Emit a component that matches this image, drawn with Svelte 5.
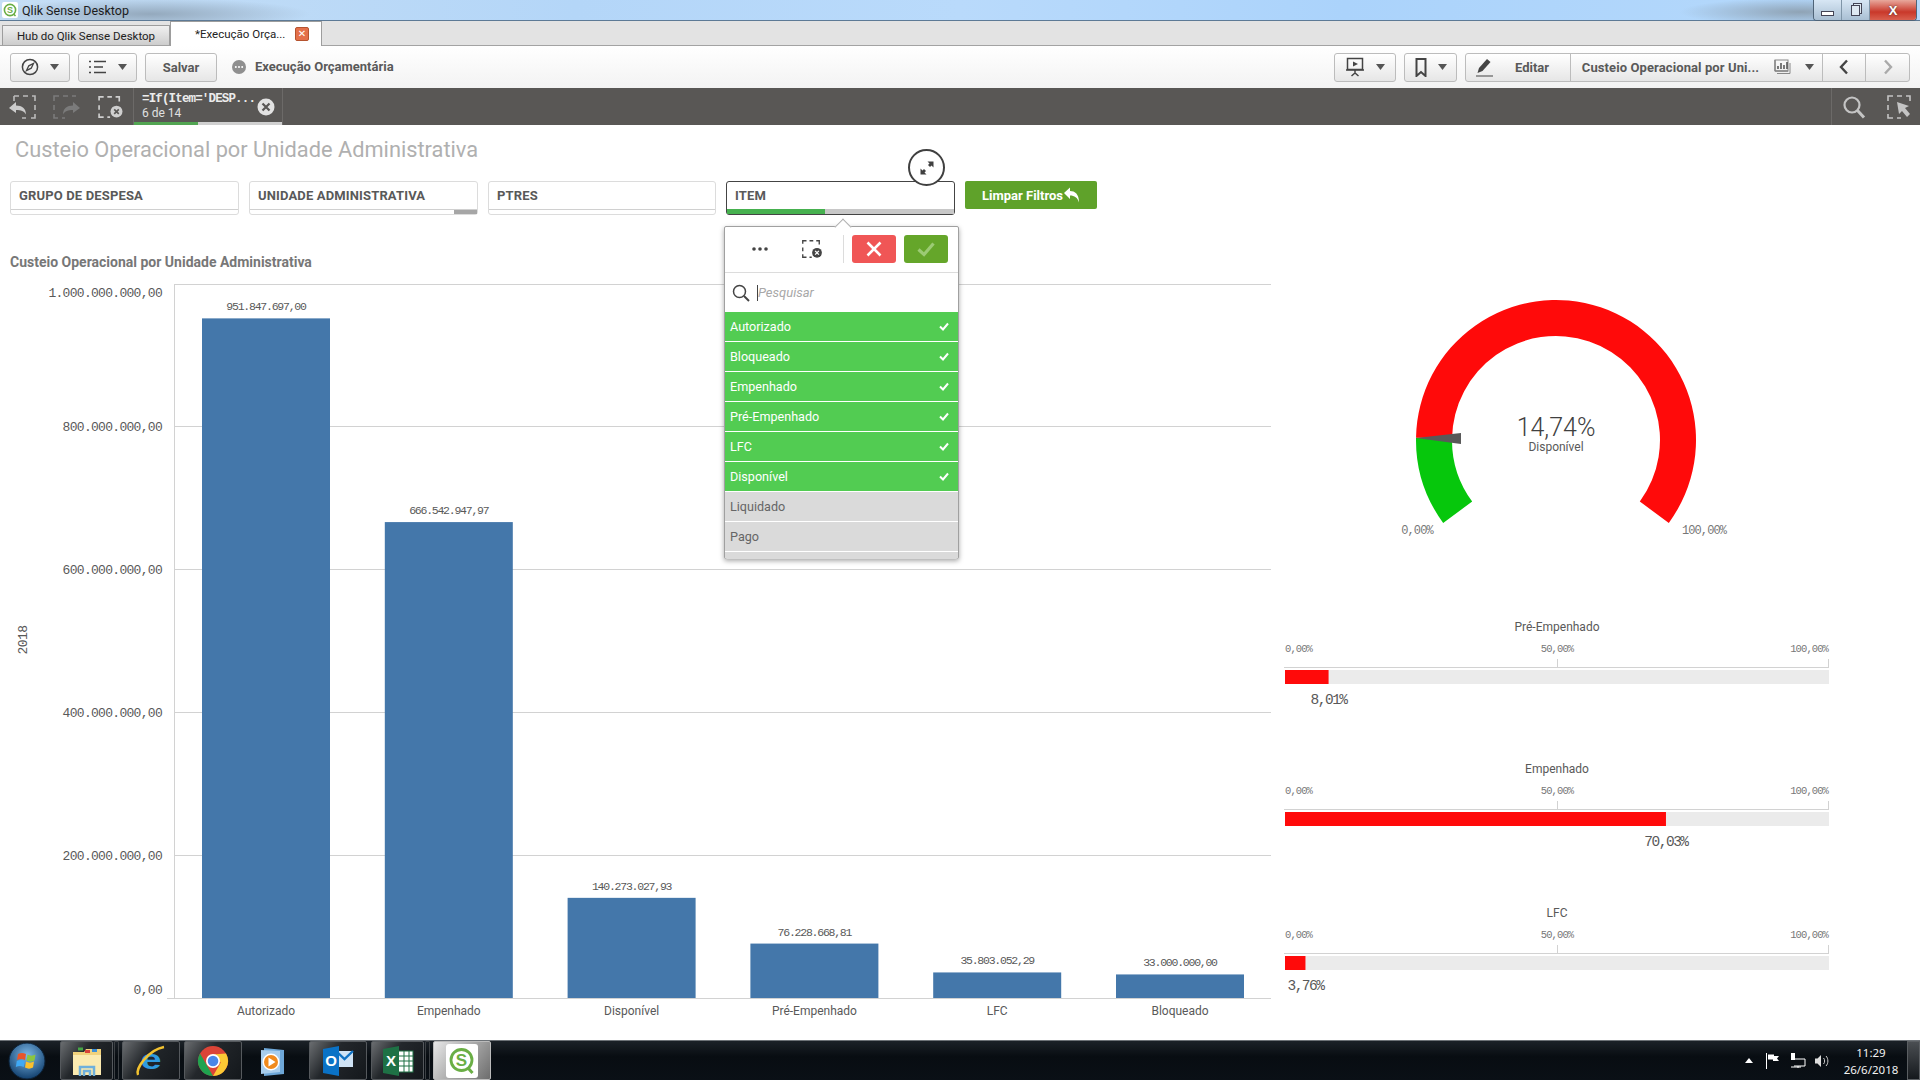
<script lang="ts">
  type Bar = { name: string; value: number; label: string };
  const bars: Bar[] = [
    { name: 'Autorizado', value: 951847697, label: '951.847.697,00' },
    { name: 'Empenhado', value: 666542947.97, label: '666.542.947,97' },
    { name: 'Disponível', value: 140273027.93, label: '140.273.027,93' },
    { name: 'Pré-Empenhado', value: 76228668.81, label: '76.228.668,81' },
    { name: 'LFC', value: 35803052.29, label: '35.803.052,29' },
    { name: 'Bloqueado', value: 33000000, label: '33.000.000,00' },
  ];
  const ticks = [
    { y: 284, ly: 293, label: '1.000.000.000,00' },
    { y: 426, ly: 427, label: '800.000.000,00' },
    { y: 569, ly: 570, label: '600.000.000,00' },
    { y: 712, ly: 713, label: '400.000.000,00' },
    { y: 855, ly: 856, label: '200.000.000,00' },
    { y: 998, ly: 990, label: '0,00' },
  ];
  const barTop = (v: number) => 998 - (v / 1e9) * 714;
  const barX = (i: number) => 202 + i * 182.8;

  const filters = ['GRUPO DE DESPESA', 'UNIDADE ADMINISTRATIVA', 'PTRES'];
  const selected = ['Autorizado', 'Bloqueado', 'Empenhado', 'Pré-Empenhado', 'LFC', 'Disponível'];
  const optional = ['Liquidado', 'Pago', ''];

  const bullets = [
    { title: 'Pré-Empenhado', pct: 8.01, text: '8,01%' },
    { title: 'Empenhado', pct: 70.03, text: '70,03%' },
    { title: 'LFC', pct: 3.76, text: '3,76%' },
  ];

  // gauge geometry, in page coordinates
  const cx = 1556, cy = 440, ro = 140, ri = 104, sweep = 126.3;
  function pt(r: number, deg: number) {
    const a = (deg * Math.PI) / 180;
    return `${(cx + r * Math.sin(a)).toFixed(2)} ${(cy - r * Math.cos(a)).toFixed(2)}`;
  }
  function arc(from: number, to: number) {
    const large = to - from > 180 ? 1 : 0;
    return `M${pt(ro, from)} A${ro} ${ro} 0 ${large} 1 ${pt(ro, to)} L${pt(ri, to)} A${ri} ${ri} 0 ${large} 0 ${pt(ri, from)} Z`;
  }
  const split = -sweep + 2 * sweep * 0.1474;
</script>

{#snippet caret()}
  <svg class="caret" width="9" height="6" viewBox="0 0 9 6"><path d="M0 0h9L4.5 6z" fill="#555" /></svg>
{/snippet}

{#snippet clearSel(c: string, x: string, w: number, h: number)}
  <svg width={w} height={h} viewBox="0 0 28 24">
    <path d="M1 5V1h5M10 1h5M19 1h0M1 10v5M1 19v4h5M10 23h3M19 1h4v5" fill="none" stroke={c} stroke-width="1.8" />
    <circle cx="20" cy="17" r="6.5" fill={c} />
    <path d="M17.5 14.5l5 5m0-5l-5 5" stroke={x} stroke-width="1.8" />
  </svg>
{/snippet}

<div class="page">
  <header class="titlebar">
    <svg width="16" height="16" viewBox="0 0 16 16" class="app-ico">
      <rect width="16" height="16" rx="2" fill="#fff" />
      <circle cx="8" cy="8" r="5.6" fill="none" stroke="#6aae45" stroke-width="1.6" />
      <path d="M11.5 12l2 2" stroke="#6aae45" stroke-width="1.6" />
      <text x="8" y="11" text-anchor="middle" class="ico-s small">S</text>
    </svg>
    <span class="wintitle">Qlik Sense Desktop</span>
    <div class="wincontrols">
      <span class="wc"><i class="min"></i></span>
      <span class="wc"><i class="max"></i></span>
      <span class="wc close">X</span>
    </div>
  </header>

  <nav class="tabs">
    <div class="tab">Hub do Qlik Sense Desktop</div>
    <div class="tab active">
      <span class="tabname">*Execução Orça...</span>
      <span class="tabx">✕</span>
    </div>
  </nav>

  <div class="toolbar">
    <button class="btn w60">
      <svg width="18" height="18" viewBox="0 0 18 18"><circle cx="9" cy="9" r="7.6" fill="none" stroke="#444" stroke-width="1.5" /><path d="M12.5 5.5L10.2 10.2 5.5 12.5 7.8 7.8z" fill="none" stroke="#444" stroke-width="1.3" /></svg>
      {@render caret()}
    </button>
    <button class="btn w59">
      <svg width="18" height="14" viewBox="0 0 18 14"><path d="M0 1.5h2M0 7h2M0 12.5h2M5 1.5h12M5 7h9M5 12.5h12" stroke="#444" stroke-width="1.7" /></svg>
      {@render caret()}
    </button>
    <button class="btn save">Salvar</button>
    <svg class="dotcirc" width="14" height="14" viewBox="0 0 14 14"><circle cx="7" cy="7" r="7" fill="#8f8f8f" /><circle cx="3.8" cy="7" r="1" fill="#fff" /><circle cx="7" cy="7" r="1" fill="#fff" /><circle cx="10.2" cy="7" r="1" fill="#fff" /></svg>
    <span class="appname">Execução Orçamentária</span>
    <div class="spacer"></div>
    <button class="btn w62">
      <svg width="20" height="20" viewBox="0 0 20 20"><rect x="2.5" y="1.5" width="15" height="11" fill="none" stroke="#444" stroke-width="1.5" /><path d="M8 4.5l5 2.5-5 2.5z" fill="#444" /><path d="M1 13h18M10 13v3M6.5 19l3.5-3 3.5 3" fill="none" stroke="#444" stroke-width="1.5" /></svg>
      {@render caret()}
    </button>
    <button class="btn w53">
      <svg width="12" height="19" viewBox="0 0 12 19"><path d="M1.5 1h9v17l-4.500-4-4.500 4z" fill="none" stroke="#444" stroke-width="2" /></svg>
      {@render caret()}
    </button>
    <div class="btngroup">
      <button class="seg edit">
        <svg width="18" height="20" viewBox="0 0 18 20"><path d="M1.500 16l1.500-5 8-9 3.500 3-8 9z" fill="#444" /><path d="M0 19h17" stroke="#444" stroke-width="1.2" /></svg>
        <span>Editar</span>
      </button>
      <button class="seg sheet">
        <span class="sheetname">Custeio Operacional por Uni...</span>
        <svg width="18" height="16" viewBox="0 0 18 16"><path d="M1 1v11h13" fill="none" stroke="#555" /><rect x="1" y="1" width="13" height="11" fill="none" stroke="#888" /><path d="M4 10V7M7 10V4M10 10V6M13 10V3" stroke="#444" stroke-width="1.4" /><path d="M3 14.500h13V4" fill="none" stroke="#888" /></svg>
        {@render caret()}
      </button>
      <button class="seg nav" aria-label="anterior">
        <svg width="10" height="16" viewBox="0 0 10 16"><path d="M8 1.500L2 8l6 6.500" fill="none" stroke="#444" stroke-width="2.400" /></svg>
      </button>
      <button class="seg nav" aria-label="próxima">
        <svg width="10" height="16" viewBox="0 0 10 16"><path d="M2 1.500L8 8l-6 6.500" fill="none" stroke="#aaa" stroke-width="2.400" /></svg>
      </button>
    </div>
  </div>

  <div class="selbar">
    <div class="selicons">
      <svg width="28" height="24" viewBox="0 0 28 24">
        <path d="M6 1h5M15 1h5M24 1h3v5M27 10v5M27 19v4h-4M18 23h-4M6 6V1" fill="none" stroke="#bbb" stroke-width="1.600" />
        <path d="M1 13l7-6v3.500c6 0 10 3 10 9-2-3.500-5-4.500-10-4.500V18z" fill="#ccc" />
      </svg>
      <svg width="28" height="24" viewBox="0 0 28 24">
        <path d="M1 6V1h5M10 1h5M19 1h4M1 10v5M1 19v4h4M9 23h3" fill="none" stroke="#7b7b7b" stroke-width="1.600" />
        <path d="M27 13l-7-6v3.500c-6 0-10 3-10 9 2-3.500 5-4.500 10-4.500V18z" fill="#7b7b7b" />
      </svg>
      {@render clearSel('#cfcfcf', '#595755', 26, 22)}
    </div>
    <div class="seltab">
      <div class="seltext">
        <strong>=If(Item='DESP...</strong>
        <span>6 de 14</span>
      </div>
      <svg width="18" height="18" viewBox="0 0 18 18"><circle cx="9" cy="9" r="8.500" fill="#e2e2e2" /><path d="M5.500 5.500l7 7m0-7l-7 7" stroke="#595755" stroke-width="2.200" /></svg>
      <div class="selprogress"><i></i></div>
    </div>
    <div class="spacer"></div>
    <div class="seltools">
      <svg width="24" height="24" viewBox="0 0 24 24"><circle cx="10" cy="10" r="7.500" fill="none" stroke="#c4c4c4" stroke-width="2.200" /><path d="M15.500 15.500L22 22.500" stroke="#c4c4c4" stroke-width="3" /></svg>
      <svg width="24" height="24" viewBox="0 0 24 24">
        <path d="M1 6V1h5M10 1h5M19 1h4v5M1 10v5M1 19v4h5M10 23h4" fill="none" stroke="#c4c4c4" stroke-width="1.600" />
        <path d="M10 7l12 4-4 2 5 6-3 3-5-6-3 3z" fill="#c4c4c4" />
      </svg>
    </div>
  </div>

  <main class="content">
    <h1 class="sheettitle">Custeio Operacional por Unidade Administrativa</h1>

    <div class="filters">
      {#each filters as f, i}
        <div class="filter">
          <span class="flabel">{f}</span>
          <div class="fbar">{#if i === 1}<i class="fgrey"></i>{/if}</div>
        </div>
      {/each}
      <div class="filter open">
        <span class="flabel">ITEM</span>
        <div class="fbar"><i class="fgreen"></i></div>
        <div class="expand">
          <svg width="18" height="18" viewBox="0 0 18 18"><path d="M15.500 2.500v6l-2-2-1.500 1.500-2-2 1.500-1.500-2-2zM2.500 15.500v-6l2 2 1.500-1.500 2 2-1.500 1.500 2 2z" fill="#404040" /></svg>
        </div>
        <div class="popover">
          <i class="arrow"></i>
          <div class="poptools">
            <svg class="dots" width="16" height="4" viewBox="0 0 16 4"><circle cx="2" cy="2" r="1.800" fill="#444" /><circle cx="8" cy="2" r="1.800" fill="#444" /><circle cx="14" cy="2" r="1.800" fill="#444" /></svg>
            {@render clearSel('#444', '#fff', 21, 18)}
            <i class="vsep"></i>
            <span class="act red">
              <svg width="18" height="18" viewBox="0 0 18 18"><path d="M2.500 2.500l13 13m0-13l-13 13" stroke="#fff" stroke-width="2.600" /></svg>
            </span>
            <span class="act green">
              <svg width="20" height="18" viewBox="0 0 20 18"><path d="M2.500 9.500l5.500 5 9.500-11" fill="none" stroke="#9ccb74" stroke-width="3.200" /></svg>
            </span>
          </div>
          <div class="popsearch">
            <svg width="18" height="18" viewBox="0 0 18 18"><circle cx="7.500" cy="7.500" r="6" fill="none" stroke="#444" stroke-width="1.500" /><path d="M12 12l5 5" stroke="#444" stroke-width="2" /></svg>
            <i class="cursor"></i>
            <span class="ph">Pesquisar</span>
          </div>
          {#each selected as s}
            <div class="row sel">
              <span>{s}</span>
              <svg width="10" height="9" viewBox="0 0 10 9"><path d="M1 4.500l3 3 5-6" fill="none" stroke="#fff" stroke-width="2" /></svg>
            </div>
          {/each}
          {#each optional as o}
            <div class="row alt"><span>{o}</span></div>
          {/each}
        </div>
      </div>
      <button class="clearbtn">
        Limpar Filtros
        <svg width="16" height="16" viewBox="0 0 16 16"><path d="M0 6l6-5.500V4c5 0 9 3 9 11.500C13.500 10.500 10.500 8.500 6 8.500V12z" fill="#fff" /></svg>
      </button>
    </div>

    <h2 class="charttitle">Custeio Operacional por Unidade Administrativa</h2>

    <div class="charts">
      <svg class="barchart" width="1280" height="766" viewBox="0 274 1280 766">
        <text class="ax2018" transform="translate(27 640) rotate(-90)" text-anchor="middle">2018</text>
        {#each ticks as t, i}
          <line x1={i === 5 ? 167 : 174} x2="1271" y1={t.y + 0.5} y2={t.y + 0.5} class="grid" />
          <text x="162" y={t.ly + 4} text-anchor="end" class="ytick">{t.label}</text>
        {/each}
        <line x1="174.500" x2="174.500" y1="284" y2="998" class="grid" />
        {#each bars as b, i}
          <rect x={barX(i)} y={barTop(b.value)} width="128" height={998 - barTop(b.value)} class="bar" />
          <text x={barX(i) + 64} y={barTop(b.value) - 8} text-anchor="middle" class="vlabel">{b.label}</text>
          <text x={barX(i) + 64} y="1015" text-anchor="middle" class="xlabel">{b.name}</text>
        {/each}
      </svg>

      <aside class="kpis">
        <svg width="640" height="286" viewBox="1280 274 640 286">
          <path d={arc(-sweep, split)} fill="#06c70c" />
          <path d={arc(split, sweep)} fill="#ff0a0a" />
          <path d="M1416 438l45-5v11z" fill="#595959" />
          <text x={cx} y="436" text-anchor="middle" class="gval">14,74%</text>
          <text x={cx} y="451" text-anchor="middle" class="glabel">Disponível</text>
          <text x="1417" y="534" text-anchor="middle" class="gend">0,00%</text>
          <text x="1704" y="534" text-anchor="middle" class="gend">100,00%</text>
        </svg>

        {#each bullets as b}
          <svg class="bullet" width="640" height="100" viewBox="0 0 640 100">
            <text x="277" y="14" text-anchor="middle" class="btitle">{b.title}</text>
            <text x="5" y="35" class="bscale">0,00%</text>
            <text x="277" y="35" text-anchor="middle" class="bscale">50,00%</text>
            <text x="548" y="35" text-anchor="end" class="bscale">100,00%</text>
            <path d="M4 50.500H549M277.500 42v8M548.500 42v8" class="grid" fill="none" />
            <rect x="5" y="53" width="544" height="14" fill="#ebebeb" />
            <rect x="5" y="53" width={(544 * b.pct) / 100} height="14" fill="#ff0a0a" />
            <text x={5 + (544 * b.pct) / 100} y="87" text-anchor="middle" class="bval">{b.text}</text>
          </svg>
        {/each}
      </aside>
    </div>
  </main>

  <footer class="taskbar">
    <div class="orb">
      <svg width="38" height="38" viewBox="0 0 38 38">
        <defs>
          <radialGradient id="orbg" cx="50%" cy="35%" r="65%"><stop offset="0" stop-color="#7db9e8" /><stop offset="1" stop-color="#12406e" /></radialGradient>
        </defs>
        <circle cx="19" cy="19" r="18" fill="url(#orbg)" stroke="#0c2238" />
        <path d="M10 12c3-1.500 5-1.500 8 0l-1 6c-3-1.500-5-1.500-8 0z" fill="#e8552a" />
        <path d="M19.500 12.500c3 1.500 5 1.500 8 0l-1 6c-3 1.500-5 1.500-8 0z" fill="#8cc63f" />
        <path d="M8.800 19c3-1.500 5-1.500 8 0l-1 6c-3-1.500-5-1.500-8 0z" fill="#3fa9f5" />
        <path d="M18 19.500c3 1.500 5 1.500 8 0l-1 6c-3 1.500-5 1.500-8 0z" fill="#fbc02d" />
      </svg>
    </div>
    <div class="tb w53">
      <svg width="34" height="34" viewBox="0 0 34 34">
        <path d="M3 8h11l2-3h15v24H3z" fill="#f1d27c" />
        <rect x="3" y="11" width="28" height="20" fill="#fbeab0" />
        <rect x="8" y="3.500" width="5" height="3" fill="#46a546" /><rect x="15" y="6" width="5" height="3" fill="#d8433a" /><rect x="22" y="5" width="5" height="3" fill="#3c8fd8" />
        <path d="M10 32V23h14v9M14 32v-5h6v5" fill="none" stroke="#6fb0dc" stroke-width="2.500" />
      </svg>
    </div>
    <i class="tbsep"></i>
    <div class="tb w58 first">
      <svg width="34" height="34" viewBox="0 0 34 34">
        <text transform="translate(17 25) scale(1.35 1)" text-anchor="middle" class="ie">e</text>
        <path d="M4 31C1 25 14 6 30 3" fill="none" stroke="#f2c230" stroke-width="2.400" />
      </svg>
    </div>
    <div class="tb w58">
      <svg width="32" height="32" viewBox="0 0 32 32">
        <circle cx="16" cy="16" r="15" fill="#db4437" />
        <path d="M16 31A15 15 0 0 1 3 8.500l7.800 13.500z" fill="#1fa34f" />
        <path d="M29 8.500A15 15 0 0 1 16 31l7.800-13.500L16 9.500z" fill="#fcc934" />
        <circle cx="16" cy="16" r="7" fill="#fff" /><circle cx="16" cy="16" r="5.300" fill="#4a86e8" />
      </svg>
    </div>
    <div class="tb plain">
      <svg width="26" height="30" viewBox="0 0 26 30">
        <path d="M4 2l20 2v24L4 30z" fill="#6ea7d8" /><path d="M1 4l19 1v21L1 28z" fill="#a8cdec" />
        <circle cx="11" cy="16" r="8.500" fill="#fff" /><circle cx="11" cy="16" r="7" fill="#f08a1d" /><path d="M8.500 11.500l7 4.500-7 4.500z" fill="#fff" />
      </svg>
    </div>
    <div class="tb w58">
      <svg width="32" height="32" viewBox="0 0 32 32">
        <path d="M14 6h17v16H14z" fill="#cfe3f5" /><path d="M14 6l8.500 8L31 6" fill="none" stroke="#1072c4" stroke-width="2.400" />
        <path d="M1 4l16-3v30L1 28z" fill="#0a72c6" /><text x="9" y="21" text-anchor="middle" class="ol">O</text>
      </svg>
    </div>
    <div class="tb w53 xl">
      <svg width="32" height="32" viewBox="0 0 32 32">
        <rect x="15" y="6" width="16" height="21" fill="#fff" stroke="#1e7145" />
        <path d="M15 11h16M15 16h16M15 21h16M22 6v21M27 6v21" stroke="#1e7145" />
        <path d="M1 4l16-3v30L1 28z" fill="#1e7145" /><text x="9" y="21" text-anchor="middle" class="ol">X</text>
      </svg>
    </div>
    <i class="tbsep"></i>
    <div class="tb w58 active">
      <svg width="32" height="34" viewBox="0 0 32 34">
        <rect width="32" height="34" rx="3" fill="#fff" />
        <circle cx="15.500" cy="16" r="10.500" fill="none" stroke="#6aae45" stroke-width="2.800" />
        <path d="M22 24l4.500 5" stroke="#6aae45" stroke-width="3" />
        <text x="15.500" y="21.500" text-anchor="middle" class="ico-s">S</text>
      </svg>
    </div>
    <div class="spacer"></div>
    <div class="tray">
      <svg class="traytri" width="8" height="5" viewBox="0 0 8 5"><path d="M0 5l4-5 4 5z" fill="#fff" /></svg>
      <svg width="16" height="16" viewBox="0 0 16 16"><path d="M1.500 0v16" stroke="#fff" /><path d="M3 1.500h6v1.500h5l-2 2.500 2 2.500H8V6.500H3z" fill="#fff" /></svg>
      <svg width="16" height="16" viewBox="0 0 16 16"><path d="M4 6H15V13H4M1 14H11M8 13v2" fill="none" stroke="#fff" /><rect x="1" y="0" width="4" height="7" fill="#fff" /></svg>
      <svg width="15" height="14" viewBox="0 0 15 14"><path d="M0 4.500h2.500L6 1v12L2.500 9.500H0z" fill="#ddd" /><path d="M8.500 4c1.500 1.500 1.500 4.500 0 6M11 2c2.500 2.500 2.500 7.500 0 10" fill="none" stroke="#ccc" /></svg>
    </div>
    <div class="clock"><span>11:29</span><span>26/6/2018</span></div>
    <i class="showdesk"></i>
  </footer>
</div>

<style>
  :global(body) {
    margin: 0;
    overflow: hidden;
    background: #fff;
  }
  i {
    display: block;
  }
  .page {
    width: 1920px;
    height: 1080px;
    display: flex;
    flex-direction: column;
    overflow: hidden;
    font-family: Roboto, sans-serif;
    color: #595959;
  }
  .spacer {
    flex: 1;
  }

  .titlebar {
    height: 21px;
    flex: none;
    box-sizing: border-box;
    display: flex;
    align-items: center;
    border-bottom: 1px solid #5d7a96;
    background:
      radial-gradient(ellipse 160px 16px at 150px 14px, #94a9bd, transparent),
      radial-gradient(ellipse 120px 14px at 1800px 12px, #8fa3b5, transparent),
      linear-gradient(90deg, #c5def5 0, #b4d6f8 30%, #b9dafb 50%, #abd3fb 70%, #b6d9fb 100%);
  }
  .app-ico {
    margin: 0 4px 0 2px;
  }
  .wintitle {
    font: 12.5px Roboto, sans-serif;
    color: #1c1c1c;
  }
  .wincontrols {
    margin-left: auto;
    margin-right: 3px;
    display: flex;
    height: 20px;
    align-self: flex-start;
    border: 1px solid #4f6478;
    border-top: 0;
    border-radius: 0 0 4px 4px;
    overflow: hidden;
  }
  .wc {
    width: 27px;
    display: flex;
    align-items: center;
    justify-content: center;
    background: linear-gradient(#d7e6f4, #a9bfd3);
    border-right: 1px solid #7f95a8;
  }
  .wc.close {
    width: 46px;
    border: 0;
    background: linear-gradient(#e8a89c, #c9382a 60%, #d9604f);
    color: #fff;
    font: bold 13px "Liberation Sans", sans-serif;
    text-shadow: 0 0 2px #333;
  }
  .min {
    width: 11px;
    height: 3px;
    margin-top: 6px;
    background: #fff;
    border: 1px solid #445;
  }
  .max {
    width: 7px;
    height: 9px;
    background: #dfe9f2;
    border: 1px solid #445;
    box-shadow: 2px -2px 0 -1px #dfe9f2, 2px -2px 0 0 #445;
  }

  .tabs {
    height: 25px;
    flex: none;
    box-sizing: border-box;
    display: flex;
    align-items: flex-end;
    padding-left: 2px;
    background: #e3e3e3;
    border-bottom: 1px solid #a3a3a3;
  }
  .tab {
    box-sizing: border-box;
    width: 168px;
    height: 21px;
    margin-bottom: -1px;
    display: flex;
    align-items: center;
    justify-content: center;
    font: 11.5px Roboto, sans-serif;
    color: #222;
    background: linear-gradient(#f0f0f0, #cdcdcd);
    border: 1px solid #9d9d9d;
    border-bottom-color: #a3a3a3;
  }
  .tab.active {
    width: 152px;
    height: 25px;
    background: #fff;
    border-bottom: 0;
    justify-content: flex-start;
    padding-left: 24px;
  }
  .tabname {
    width: 100px;
    white-space: nowrap;
  }
  .tabx {
    width: 14px;
    height: 14px;
    background: #e4704a;
    border: 1px solid #b5532f;
    border-radius: 2px;
    color: #fff;
    font: bold 10px/12px "DejaVu Sans", sans-serif;
    text-align: center;
    box-sizing: border-box;
  }

  .toolbar {
    height: 42px;
    flex: none;
    box-sizing: border-box;
    display: flex;
    align-items: center;
    padding: 0 10px;
    background: linear-gradient(#fff, #f3f3f3);
  }
  button {
    font-family: inherit;
    padding: 0;
    margin: 0;
  }
  .btn {
    height: 29px;
    box-sizing: border-box;
    display: flex;
    align-items: center;
    justify-content: center;
    gap: 11px;
    border: 1px solid #bcbcbc;
    border-radius: 3px;
    background: linear-gradient(#fff, #e6e6e6);
    color: #595959;
    font-weight: 700;
    font-size: 13px;
  }
  .w60 { width: 60px; margin-right: 8px; }
  .w59 { width: 59px; margin-right: 8px; }
  .w62 { width: 62px; margin-right: 8px; }
  .w53 { width: 53px; margin-right: 8px; }
  .save { width: 72px; }
  .dotcirc {
    margin: 0 9px 0 15px;
  }
  .appname {
    font-weight: 700;
    font-size: 13px;
    line-height: 13px;
    margin-top: -1px;
    color: #595959;
  }
  .btngroup {
    display: flex;
    width: 445px;
    height: 29px;
    box-sizing: border-box;
    border: 1px solid #bcbcbc;
    border-radius: 3px;
    overflow: hidden;
    background: linear-gradient(#fff, #e6e6e6);
  }
  .seg {
    border: 0;
    border-right: 1px solid #bcbcbc;
    background: none;
    display: flex;
    align-items: center;
    font-weight: 700;
    font-size: 13px;
    color: #595959;
  }
  .seg:last-child {
    border-right: 0;
  }
  .edit {
    width: 105px;
    padding-left: 10px;
    gap: 21px;
  }
  .sheet {
    width: 253px;
    padding-left: 11px;
    gap: 14px;
  }
  .sheetname {
    width: 178px;
    text-align: left;
    white-space: nowrap;
    letter-spacing: 0.1px;
  }
  .sheet .caret {
    margin-left: -1px;
  }
  .nav {
    width: 43px;
    justify-content: center;
  }

  .selbar {
    height: 37px;
    flex: none;
    display: flex;
    background: #595755;
  }
  .selicons {
    width: 133px;
    box-sizing: border-box;
    display: flex;
    align-items: center;
    padding-left: 8px;
    gap: 17px;
  }
  .seltab {
    position: relative;
    width: 150px;
    box-sizing: border-box;
    border-left: 1px solid #6c6a68;
    border-right: 1px solid #6c6a68;
    padding-left: 8px;
    display: flex;
    align-items: center;
    gap: 6px;
  }
  .seltext {
    width: 109px;
    display: flex;
    flex-direction: column;
    line-height: 14px;
    margin-top: -1px;
  }
  .seltext strong {
    font: bold 12.5px/14px "Liberation Mono", monospace;
    letter-spacing: -0.85px;
    color: #ececec;
    white-space: nowrap;
  }
  .seltext span {
    font-size: 12px;
    color: #e0e0e0;
  }
  .selprogress {
    position: absolute;
    left: 0;
    right: 0;
    bottom: 0;
    height: 3px;
    background: #d0d0d0;
  }
  .selprogress i {
    width: 43%;
    height: 3px;
    background: #52a552;
  }
  .seltools {
    width: 89px;
    box-sizing: border-box;
    border-left: 1px solid #6c6a68;
    display: flex;
    align-items: center;
    padding-left: 10px;
    gap: 21px;
  }

  .content {
    flex: 1;
    min-height: 0;
  }
  .sheettitle {
    margin: 0;
    height: 50px;
    padding-left: 15px;
    font-weight: 400;
    font-size: 21.8px;
    line-height: 50px;
    color: #b0b0b0;
  }
  .filters {
    margin: 6px 0 0 10px;
    display: flex;
    gap: 10px;
  }
  .filter {
    position: relative;
    width: 229px;
    height: 34px;
    box-sizing: border-box;
    border: 1px solid #dcdcdc;
    border-radius: 3px;
    background: #fff;
    display: flex;
    flex-direction: column;
  }
  .filter:nth-child(3) {
    width: 228px;
  }
  .filter.open {
    border-color: #444;
  }
  .flabel {
    flex: 1;
    padding-left: 8px;
    font-weight: 700;
    font-size: 13px;
    letter-spacing: 0.15px;
    line-height: 27px;
    color: #595959;
  }
  .fbar {
    height: 5px;
    flex: none;
    box-sizing: border-box;
    border-top: 1px solid #d0d0d0;
    display: flex;
    justify-content: flex-end;
  }
  .fgrey {
    width: 23px;
    background: #a6a6a6;
  }
  .open .fbar {
    background: #c8c8c8;
    border: 0;
    justify-content: flex-start;
  }
  .fgreen {
    width: 43%;
    background: #46b14f;
  }
  .expand {
    position: absolute;
    z-index: 3;
    left: 181px;
    top: -33px;
    width: 37px;
    height: 37px;
    box-sizing: border-box;
    border: 2px solid #404040;
    border-radius: 50%;
    background: #fff;
    display: flex;
    align-items: center;
    justify-content: center;
  }
  .popover {
    position: absolute;
    z-index: 2;
    left: -3px;
    top: 44px;
    width: 235px;
    height: 333px;
    box-sizing: border-box;
    background: #fff;
    border: 1px solid #a0a0a0;
    border-radius: 2px;
    box-shadow: 0 2px 5px rgba(0, 0, 0, 0.35);
  }
  .arrow {
    position: absolute;
    left: 112px;
    top: -6px;
    width: 11px;
    height: 11px;
    background: #fff;
    border: 1px solid #b0b0b0;
    border-right: 0;
    border-bottom: 0;
    transform: rotate(45deg);
  }
  .poptools {
    height: 46px;
    box-sizing: border-box;
    border-bottom: 1px solid #dcdcdc;
    display: flex;
    align-items: center;
    position: relative;
    padding: 0 0 2px 27px;
  }
  .dots {
    margin-right: 34px;
  }
  .vsep {
    width: 1px;
    height: 28px;
    background: #dcdcdc;
    margin: 0 8px 0 20px;
  }
  .act {
    width: 44px;
    height: 28px;
    border-radius: 3px;
    margin-right: 8px;
    display: flex;
    align-items: center;
    justify-content: center;
  }
  .red {
    background: #f05656;
  }
  .green {
    background: #65a62a;
  }
  .popsearch {
    height: 39px;
    display: flex;
    align-items: center;
    padding-left: 7px;
  }
  .cursor {
    width: 1px;
    height: 16px;
    background: #444;
    margin-left: 7px;
  }
  .ph {
    font-style: italic;
    font-size: 13px;
    color: #a8a8a8;
  }
  .row {
    height: 30px;
    box-sizing: border-box;
    border-bottom: 1px solid #fff;
    padding: 0 9px 0 5px;
    display: flex;
    align-items: center;
    justify-content: space-between;
    font-size: 12.6px;
  }
  .row.sel {
    background: #52cc52;
    color: #fff;
  }
  .row.alt {
    background: #dadada;
    color: #666;
  }
  .row.alt:last-child {
    height: 7px;
    border: 0;
    border-radius: 0 0 2px 2px;
  }
  .clearbtn {
    width: 132px;
    height: 28px;
    margin-left: 0;
    border: 0;
    border-radius: 2px;
    background: #5fa22a;
    color: #fff;
    font-weight: 700;
    font-size: 13px;
    display: flex;
    align-items: center;
    justify-content: center;
    gap: 1px;
  }

  .charttitle {
    margin: 35px 0 0 10px;
    height: 24px;
    font-weight: 700;
    font-size: 14px;
    line-height: 24px;
    color: #777;
  }
  .charts {
    display: flex;
  }
  .barchart {
    flex: none;
  }
  .grid {
    stroke: #d2d2d2;
    stroke-width: 1;
  }
  .bar {
    fill: #4477aa;
  }
  text {
    font-family: Roboto, sans-serif;
    fill: #595959;
  }
  .ytick {
    font: 13px "Liberation Mono", monospace;
    letter-spacing: -0.7px;
  }
  .ax2018 {
    font: 13px "Liberation Mono", monospace;
    letter-spacing: -0.5px;
  }
  .vlabel {
    font: 11.5px "Liberation Mono", monospace;
    letter-spacing: -1.24px;
  }
  .xlabel {
    font-size: 12px;
  }
  .kpis {
    flex: none;
    width: 640px;
    display: flex;
    flex-direction: column;
  }
  .gval {
    font-size: 25px;
    font-weight: 300;
    fill: #404040;
  }
  .glabel {
    font-size: 12px;
  }
  .gend,
  .bscale {
    font: 12px "Liberation Mono", monospace;
    letter-spacing: -0.9px;
    fill: #777;
  }
  .bscale {
    font-size: 10.5px;
    letter-spacing: -0.9px;
  }
  .bullet {
    margin-top: 42px;
  }
  .bullet:nth-of-type(2) {
    margin-top: 57px;
  }
  .bullet:last-child {
    margin-top: 44px;
  }
  .btitle {
    font-size: 12px;
  }
  .bval {
    font: 14.5px "Liberation Mono", monospace;
    letter-spacing: -1.5px;
  }

  .taskbar {
    height: 40px;
    flex: none;
    box-sizing: border-box;
    display: flex;
    align-items: stretch;
    border-top: 1px solid #6d7277;
    background: linear-gradient(#1b2127, #080d12 40%, #0a1016);
  }
  .orb {
    width: 60px;
    flex: none;
    display: flex;
    align-items: center;
    padding-left: 8px;
    box-sizing: border-box;
  }
  .tb {
    flex: none;
    box-sizing: border-box;
    margin: 0 4px 0 0;
    display: flex;
    align-items: center;
    justify-content: center;
    border: 1px solid #55595d;
    border-radius: 2px;
    background: linear-gradient(125deg, #6a6d70, #23272b 40%, #14181c);
  }
  .tb.w53 {
    width: 53px;
    margin-right: 0;
  }
  .tb.w58 {
    width: 58px;
  }
  .tb.first {
    margin-left: 3px;
  }
  .tb.plain {
    width: 58px;
    border-color: transparent;
    background: none;
    margin: 0 7px 0 -2px;
  }
  .tb.active {
    width: 58px;
    margin-left: 3px;
    background: linear-gradient(125deg, #e8e8e8, #b5b5b5 40%, #6d6d6d);
    border-color: #bbb;
  }
  .tbsep {
    width: 5px;
    margin-left: 1px;
    border: 1px solid #3c4044;
    box-sizing: border-box;
    border-radius: 1px;
  }
  .ico-s {
    font: bold 17px "Liberation Sans", sans-serif;
    fill: #6aae45;
  }
  .ico-s.small {
    font-size: 9px;
  }
  .ie {
    font: bold 28px "Liberation Sans", sans-serif;
    fill: #2f9be0;
  }
  .ol {
    font: bold 15px "Liberation Sans", sans-serif;
    fill: #fff;
  }
  .tray {
    display: flex;
    align-items: center;
    gap: 9px;
    margin-right: 9px;
  }
  .traytri {
    margin-right: 3px;
  }
  .clock {
    width: 64px;
    display: flex;
    flex-direction: column;
    align-items: center;
    justify-content: center;
    gap: 2px;
    font: 11.5px/15px "Noto Sans", sans-serif;
    color: #f2f2f2;
    margin-right: 4px;
  }
  .showdesk {
    width: 13px;
    box-sizing: border-box;
    border: 1px solid #5a5e62;
    background: linear-gradient(#4a4e52, #15191d);
  }
</style>
